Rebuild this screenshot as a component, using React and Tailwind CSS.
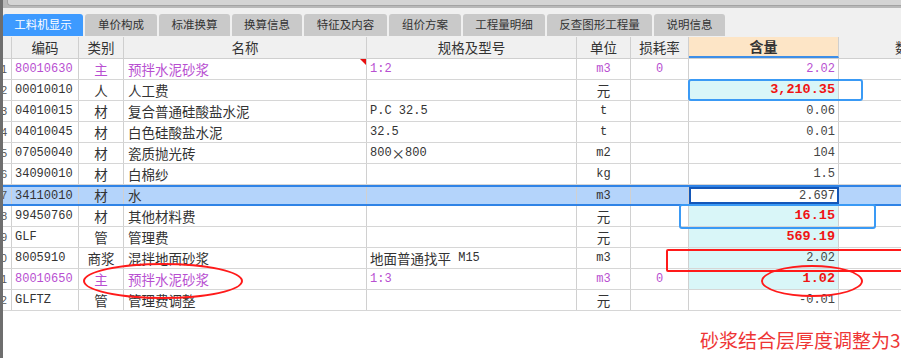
import React from 'react';

const TABS = [
  { label: '工料机显示', w: 80, active: true },
  { label: '单价构成', w: 72 },
  { label: '标准换算', w: 71 },
  { label: '换算信息', w: 70 },
  { label: '特征及内容', w: 83 },
  { label: '组价方案', w: 72 },
  { label: '工程量明细', w: 82 },
  { label: '反查图形工程量', w: 105 },
  { label: '说明信息', w: 71 },
];

const ROWS = [
  { n: 1, code: '80010630', type: '主', name: '预拌水泥砂浆', spec: '1:2', unit: 'm3', loss: '0', qty: '2.02', purple: true, marker: true },
  { n: 2, code: '00010010', type: '人', name: '人工费', spec: '', unit: '元', qty: '3,210.35', red: true, cyan: true },
  { n: 3, code: '04010015', type: '材', name: '复合普通硅酸盐水泥', spec: 'P.C 32.5', unit: 't', qty: '0.06' },
  { n: 4, code: '04010045', type: '材', name: '白色硅酸盐水泥', spec: '32.5', unit: 't', qty: '0.01' },
  { n: 5, code: '07050040', type: '材', name: '瓷质抛光砖', spec: '800×800', unit: 'm2', qty: '104' },
  { n: 6, code: '34090010', type: '材', name: '白棉纱', spec: '', unit: 'kg', qty: '1.5' },
  { n: 7, code: '34110010', type: '材', name: '水', spec: '', unit: 'm3', qty: '2.697', selected: true },
  { n: 8, code: '99450760', type: '材', name: '其他材料费', spec: '', unit: '元', qty: '16.15', red: true, cyan: true },
  { n: 9, code: 'GLF', type: '管', name: '管理费', spec: '', unit: '元', qty: '569.19', red: true, cyan: true },
  { n: 10, code: '8005910', type: '商浆', name: '混拌地面砂浆', spec: '地面普通找平 M15', unit: 'm3', qty: '2.02', cyan: true },
  { n: 11, code: '80010650', type: '主', name: '预拌水泥砂浆', spec: '1:3', unit: 'm3', loss: '0', qty: '1.02', purple: true, red: true, cyan: true },
  { n: 12, code: 'GLFTZ', type: '管', name: '管理费调整', spec: '', unit: '元', qty: '-0.01' },
];

const CJK_RE = /([\u2E80-\u9FFF\uFF00-\uFFEF\u00D7]+)/;

// mixes a CJK face with a mono face, like the SimSun cells in the original
const Mixed = ({ text, bold }) => {
  if (!text) return null;
  return text.split(CJK_RE).filter(Boolean).map((part, i) =>
    CJK_RE.test(part) ? (
      <span key={i} className="font-['Noto_Sans_CJK_SC',sans-serif] text-[13.5px]">{part}</span>
    ) : bold ? (
      <span key={i} className="font-['Liberation_Mono',monospace] text-[13.5px] font-bold">{part}</span>
    ) : (
      <span key={i} className="font-['Liberation_Mono',monospace] text-[12px] whitespace-pre">{part}</span>
    )
  );
};

const HeaderRow = () => (
  <div className="flex h-[22px] bg-[#f0f0f0] border-b border-[#cfcfcf] text-[13.5px] text-[#333] font-['Noto_Sans_CJK_SC',sans-serif]">
    <div className="w-[9px] shrink-0 border-r border-[#cfcfcf]" />
    <div className="w-[67px] shrink-0 border-r border-[#cfcfcf] flex items-center justify-center">编码</div>
    <div className="w-[45px] shrink-0 border-r border-[#cfcfcf] flex items-center justify-center">类别</div>
    <div className="w-[243px] shrink-0 border-r border-[#cfcfcf] flex items-center justify-center">名称</div>
    <div className="w-[210px] shrink-0 border-r border-[#cfcfcf] flex items-center justify-center">规格及型号</div>
    <div className="w-[54px] shrink-0 border-r border-[#cfcfcf] flex items-center justify-center">单位</div>
    <div className="w-[58px] shrink-0 border-r border-[#cfcfcf] flex items-center justify-center">损耗率</div>
    <div className="w-[150px] shrink-0 border-r border-[#cfcfcf] flex items-center justify-center bg-[#fde5c6] border-b-2 border-b-[#3d8ee8] font-bold text-[14px]">含量</div>
    <div className="w-[139px] shrink-0 flex items-center justify-center whitespace-nowrap">数量</div>
  </div>
);

const Row = ({ row }) => {
  const color = row.purple ? 'text-[#b84fd1]' : 'text-[#333]';
  const qtyColor = row.red ? 'text-[#f01414]' : row.purple ? 'text-[#b84fd1]' : 'text-[#444]';
  return (
    <div
      className={
        row.selected
          ? 'flex h-[21px] bg-[#b4d4fb] border-t-2 border-b-2 border-[#2f83e6]'
          : 'flex h-[21px] bg-white border-b border-[#d6d6d6]'
      }
    >
      <div className="w-[9px] shrink-0 border-r border-[#d0d0d0] flex items-center justify-end pr-[4px] overflow-hidden text-[11px] text-[#555] font-['Liberation_Sans',sans-serif]">
        {row.n}
      </div>
      <div className={`w-[67px] shrink-0 border-r border-[#d0d0d0] flex items-center pl-[3px] ${color}`}>
        <Mixed text={row.code} />
      </div>
      <div className={`w-[45px] shrink-0 border-r border-[#d0d0d0] flex items-center justify-center ${color}`}>
        <Mixed text={row.type} />
      </div>
      <div className={`w-[243px] shrink-0 border-r border-[#d0d0d0] flex items-center pl-[4px] relative ${color}`}>
        <Mixed text={row.name} />
        {row.marker && (
          <div className="absolute right-0 top-0 w-0 h-0 border-t-[6px] border-t-[#e81010] border-l-[6px] border-l-transparent" />
        )}
      </div>
      <div className={`w-[210px] shrink-0 border-r border-[#d0d0d0] flex items-center pl-[3px] whitespace-nowrap ${color}`}>
        <Mixed text={row.spec} />
      </div>
      <div className={`w-[54px] shrink-0 border-r border-[#d0d0d0] flex items-center justify-center ${color}`}>
        <Mixed text={row.unit} />
      </div>
      <div className={`w-[58px] shrink-0 border-r border-[#d0d0d0] flex items-center justify-center ${color}`}>
        <Mixed text={row.loss} />
      </div>
      <div
        className={
          row.selected
            ? 'w-[150px] shrink-0 flex items-center justify-end pr-[2px] bg-white border-2 border-[#1457b8] text-[#444]'
            : row.cyan
            ? `w-[150px] shrink-0 border-r border-[#d0d0d0] flex items-center justify-end pr-[3px] bg-[#d9f6f8] ${qtyColor}`
            : `w-[150px] shrink-0 border-r border-[#d0d0d0] flex items-center justify-end pr-[3px] ${qtyColor}`
        }
      >
        <Mixed text={row.qty} bold={row.red} />
      </div>
      <div className="w-[139px] shrink-0" />
    </div>
  );
};

const App = () => {
  return (
    <div className="relative w-[901px] h-[358px] overflow-hidden bg-white flex">
      <div className="w-[3px] shrink-0 bg-[#6e6e6e]" />
      <div className="flex-1 flex flex-col min-w-0">
        {/* top bar */}
        <div className="h-[8px] bg-[#b8b8b8] pl-[4px] shrink-0">
          <div className="h-[6px] bg-[#d4d4d4] rounded-bl-[4px] border-b border-l border-[#a3a3a3]" />
        </div>

        {/* tabs */}
        <div className="h-[29px] shrink-0 bg-[#f0f0f0] pt-[6px] flex items-start gap-[2px]">
          {TABS.map((tab) => (
            <div
              key={tab.label}
              style={{ width: tab.w }}
              className={
                tab.active
                  ? 'h-[22px] shrink-0 rounded-t-[3px] bg-[#3d9aff] text-white flex items-center justify-center text-[11.5px] font-["Noto_Sans_CJK_SC",sans-serif]'
                  : 'h-[22px] shrink-0 rounded-t-[3px] bg-[#c9c9c9] text-[#333] flex items-center justify-center text-[11.5px] font-["Noto_Sans_CJK_SC",sans-serif]'
              }
            >
              {tab.label}
            </div>
          ))}
        </div>

        {/* grid */}
        <HeaderRow />
        {ROWS.map((row) => (
          <Row key={row.n} row={row} />
        ))}

        <div className="flex-1 pl-[697px] pt-[18px] whitespace-nowrap text-[19px] leading-[22px] text-[#ee3535] font-['Noto_Sans_CJK_SC',sans-serif]">
          砂浆结合层厚度调整为3
        </div>
      </div>

      {/* hand-drawn markup */}
      <div className="absolute left-[688px] top-[79px] w-[175px] h-[22px] border-2 border-[#3a9af5] rounded-[3px]" />
      <div className="absolute left-[679px] top-[204px] w-[197px] h-[25px] border-2 border-[#3a9af5] rounded-[3px]" />
      <div className="absolute left-[666px] top-[249px] w-[260px] h-[23px] border-2 border-[#ff1a1a] rounded-[2px]" />
      <div className="absolute left-[761px] top-[265px] w-[102px] h-[32px] border-2 border-[#ff1a1a] rounded-[50%]" />
      <div className="absolute left-[83px] top-[263px] w-[160px] h-[36px] border-2 border-[#ff1a1a] rounded-[50%]" />
    </div>
  );
};

export default App;
